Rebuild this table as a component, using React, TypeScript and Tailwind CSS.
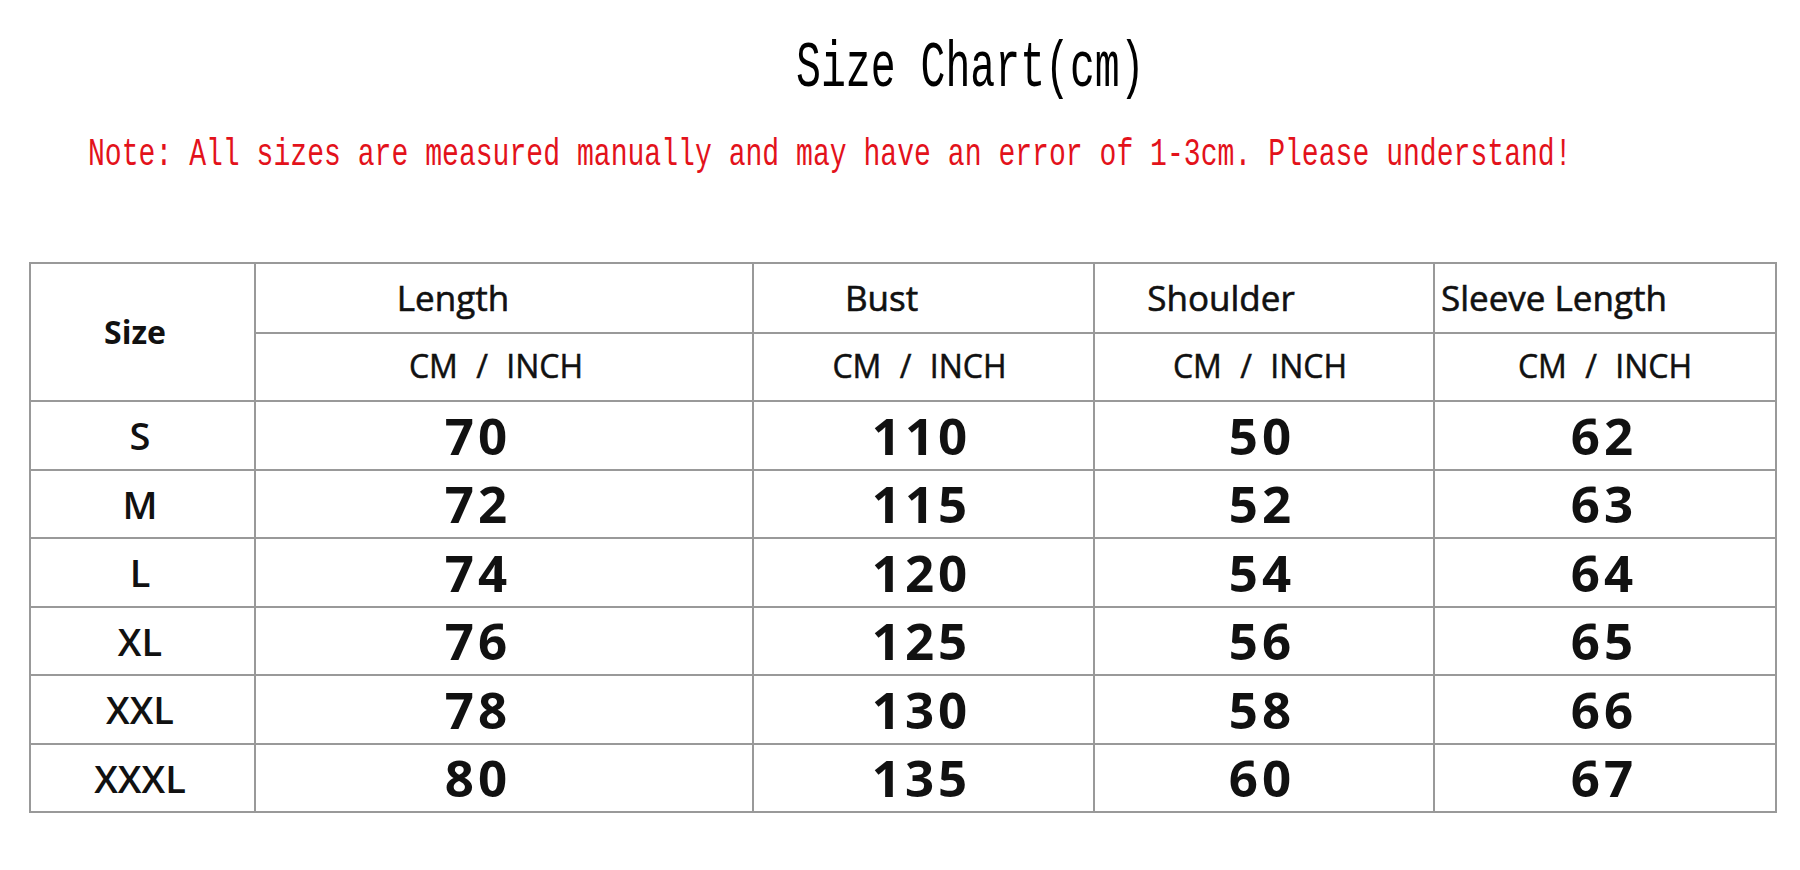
const rows = [
  { size: "S", length: "70", bust: "110", shoulder: "50", sleeve: "62" },
  { size: "M", length: "72", bust: "115", shoulder: "52", sleeve: "63" },
  { size: "L", length: "74", bust: "120", shoulder: "54", sleeve: "64" },
  { size: "XL", length: "76", bust: "125", shoulder: "56", sleeve: "65" },
  { size: "XXL", length: "78", bust: "130", shoulder: "58", sleeve: "66" },
  { size: "XXXL", length: "80", bust: "135", shoulder: "60", sleeve: "67" },
];

const cell = "border-2 border-[#999] p-0 align-middle text-center";
const head = "text-[35px] font-normal [-webkit-text-stroke:0.6px_#111]";
const unit = "text-[32px] leading-none [word-spacing:10px] [-webkit-text-stroke:0.5px_#111]";
const num = "text-[51px] font-bold leading-none tracking-[4px]";

export default function App() {
  return (
    <div className="w-[1800px] h-[870px] bg-white flex flex-col text-[#111] font-['Open_Sans',sans-serif]">
      {/* title */}
      <div className="mt-[46px] h-[46px] pl-[796px]">
        <span className="block font-['Liberation_Mono',monospace] text-[41.5px] leading-[46px] text-black scale-y-[1.55]">
          Size Chart(cm)
        </span>
      </div>

      {/* note */}
      <div className="mt-[40px] h-[46px] pl-[88px]">
        <span className="block font-['Liberation_Mono',monospace] text-[28.1px] leading-[46px] text-[#e3121b] scale-y-[1.4]">
          Note: All sizes are measured manually and may have an error of 1-3cm. Please understand!
        </span>
      </div>

      {/* table */}
      <table className="mt-[84px] ml-[29px] w-[1746px] border-collapse table-fixed">
        <colgroup>
          <col className="w-[225px]" />
          <col className="w-[498px]" />
          <col className="w-[341px]" />
          <col className="w-[340px]" />
          <col className="w-[342px]" />
        </colgroup>
        <thead>
          <tr className="h-[70px]">
            <th rowSpan={2} className={`${cell} pr-[15px] text-[32px] font-bold`}>
              Size
            </th>
            <th className={`${cell} ${head} pr-[102px]`}>Length</th>
            <th className={`${cell} ${head} pr-[84px]`}>Bust</th>
            <th className={`${cell} ${head} pr-[86px]`}>Shoulder</th>
            <th className={`${cell} ${head} !text-left pl-[6px]`}>Sleeve Length</th>
          </tr>
          <tr className="h-[68px]">
            <th className={`${cell} pr-[16px] font-normal`}>
              <span className={unit}>CM / INCH</span>
            </th>
            <th className={`${cell} pr-[8px] font-normal`}>
              <span className={unit}>CM / INCH</span>
            </th>
            <th className={`${cell} pr-[8px] font-normal`}>
              <span className={unit}>CM / INCH</span>
            </th>
            <th className={`${cell} font-normal`}>
              <span className={unit}>CM / INCH</span>
            </th>
          </tr>
        </thead>
        <tbody>
          {rows.map((r) => (
            <tr key={r.size} className="h-[68.5px]">
              <td className={`${cell} pr-[5px] text-[38px] font-semibold leading-none`}>{r.size}</td>
              <td className={`${cell} pr-[56px] pl-[4px]`}>
                <span className={num}>{r.length}</span>
              </td>
              <td className={`${cell} pr-[8px] pl-[4px]`}>
                <span className={num}>{r.bust}</span>
              </td>
              <td className={`${cell} pr-[8px] pl-[4px]`}>
                <span className={num}>{r.shoulder}</span>
              </td>
              <td className={`${cell} pr-[6px] pl-[4px]`}>
                <span className={num}>{r.sleeve}</span>
              </td>
            </tr>
          ))}
        </tbody>
      </table>
    </div>
  );
}
